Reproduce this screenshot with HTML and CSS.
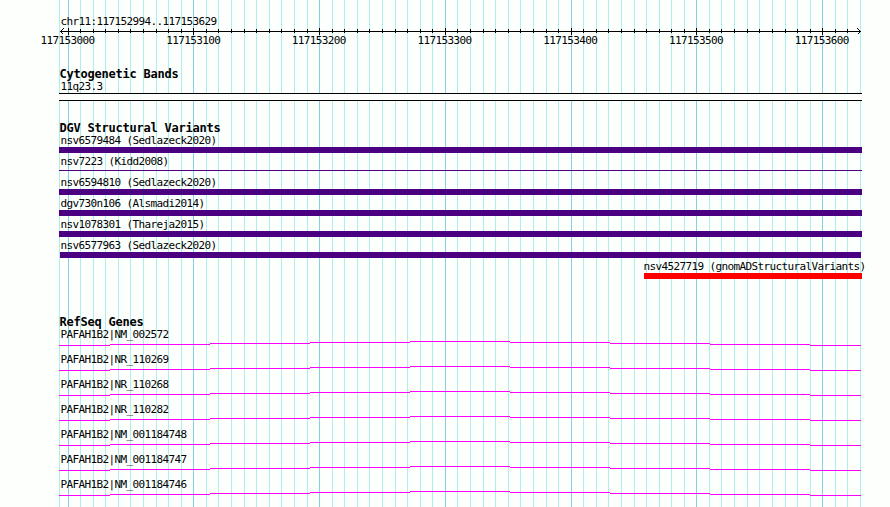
FILE: index.html
```html
<!DOCTYPE html>
<html lang="en">
<head>
<meta charset="utf-8">
<title>chr11:117152994..117153629</title>
<link rel="stylesheet" href="styles.css">
</head>
<body>
<main class="browser">
<svg class="grid" width="890" height="507" aria-hidden="true"><path id="minor" class="minor"/><path id="major" class="major"/></svg>
<header class="ruler">
<p class="label">chr11:117152994..117153629</p>
<svg class="axis" width="890" height="8" aria-hidden="true"><path d="M60 3.5H861"/><path id="ticks"/><path class="arrow" d="M63.5 0.5L60.5 3.5L63.5 6.5M857.5 0.5L860.5 3.5L857.5 6.5"/></svg>
<div class="positions"><span>117153000</span><span>117153100</span><span>117153200</span><span>117153300</span><span>117153400</span><span>117153500</span><span>117153600</span></div>
</header>
<section class="bands">
<h2>Cytogenetic Bands</h2>
<p class="label">11q23.3</p>
<div class="band"></div>
</section>
<section class="variants">
<h2>DGV Structural Variants</h2>
<div class="variant"><p class="label">nsv6579484 (Sedlazeck2020)</p><div class="bar"></div></div>
<div class="variant"><p class="label">nsv7223 (Kidd2008)</p><div class="bar thin"></div></div>
<div class="variant"><p class="label">nsv6594810 (Sedlazeck2020)</p><div class="bar"></div></div>
<div class="variant"><p class="label">dgv730n106 (Alsmadi2014)</p><div class="bar"></div></div>
<div class="variant"><p class="label">nsv1078301 (Thareja2015)</p><div class="bar"></div></div>
<div class="variant"><p class="label">nsv6577963 (Sedlazeck2020)</p><div class="bar inset"></div></div>
<div class="variant gain"><p class="label">nsv4527719 (gnomADStructuralVariants)</p><div class="bar"></div></div>
</section>
<section class="genes">
<h2>RefSeq Genes</h2>
<div id="genes"></div>
</section>
</main>
<script src="main.js"></script>
</body>
</html>
```
FILE: styles.css
```css
body { margin: 0; background: #fdfffc; color: #000; font-family: "DejaVu Sans Mono", monospace; }
.browser { position: relative; height: 507px; overflow: hidden; }
.grid { position: absolute; top: 0; left: 0; z-index: -1; }
svg { display: block; shape-rendering: crispEdges; fill: none; }
.minor { stroke: #afeeee; }
.major { stroke: #87ceeb; }
.label, .positions { margin: 0; font-size: 11px; line-height: 13px; letter-spacing: -0.622px; white-space: nowrap; }
.label { padding-left: 60.4px; }
h2 { margin: 0; padding-left: 59.4px; font-size: 12px; line-height: 14px; letter-spacing: -0.224px; }
.ruler { height: 52px; padding-top: 15px; }
.axis { stroke: #000; }
.positions { display: flex; justify-content: space-between; margin-top: -2px; padding-left: 40.4px; width: 808.5px; }
.bands { height: 54px; }
.bands .label { height: 12px; margin-top: -1px; }
.band { margin: 1px 28px 0 59px; height: 6px; border: solid #000; border-width: 1px 0; background: #fdfffc; }
.variants { height: 194px; }
.variants h2 { height: 13px; }
.variant { height: 21px; }
.bar { height: 6px; margin: 0 28px 0 59px; background: #4b0082; }
.thin { height: 1px; position: relative; top: 2px; }
.inset { margin: 0 29px 0 60px; }
.gain .label { padding-left: 643.4px; }
.gain .bar { margin-left: 644px; background: #f00; }
.genes h2 { height: 13px; }
.gene { height: 25px; }
.gene svg { stroke: #f0f; }
```
FILE: main.js
```js
const majors = [68, 193, 319, 445, 571, 696, 822];
const minors = [59, 80, 93, 105, 118, 130, 143, 156, 168, 181, 206, 218, 231, 244, 256, 269, 281, 294, 307, 332, 344, 357, 369, 382, 395, 407, 420, 432, 457, 470, 483, 495, 508, 520, 533, 546, 558, 583, 596, 608, 621, 634, 646, 659, 671, 684, 709, 721, 734, 747, 759, 772, 785, 797, 810, 835, 847, 860];
const lines = (xs, y, h) => xs.map(x => `M${x + 0.5} ${y}v${h}`).join('');
document.getElementById('minor').setAttribute('d', lines(minors, 0, 507));
document.getElementById('major').setAttribute('d', lines(majors, 0, 507));
document.getElementById('ticks').setAttribute('d', lines(majors, 0, 7) + lines(minors.slice(1, -1), 1, 4));

const intron = 'M59 4.5H110M110 3.5H210M210 2.5H310M310 1.5H410M410 0.5H510M510 1.5H610M610 2.5H710M710 3.5H810M810 4.5H861';
const genes = ['NM_002572', 'NR_110269', 'NR_110268', 'NR_110282', 'NM_001184748', 'NM_001184747', 'NM_001184746'];
document.getElementById('genes').innerHTML = genes.map(id =>
  `<div class="gene"><p class="label">PAFAH1B2|${id}</p><svg width="890" height="5"><path d="${intron}"/></svg></div>`).join('');
```
